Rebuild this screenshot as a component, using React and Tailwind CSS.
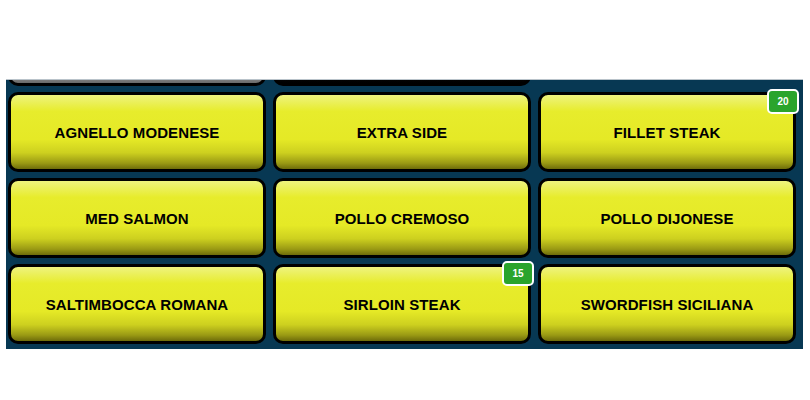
import React, { useLayoutEffect, useRef } from 'react';

// first row is scrolled out of view, only its bottom edge shows
const items = [
  { name: '', tone: 'silver' },
  { name: '', tone: 'dark' },
  null,
  { name: 'AGNELLO MODENESE' },
  { name: 'EXTRA SIDE' },
  { name: 'FILLET STEAK', count: 20 },
  { name: 'MED SALMON' },
  { name: 'POLLO CREMOSO' },
  { name: 'POLLO DIJONESE' },
  { name: 'SALTIMBOCCA ROMANA' },
  { name: 'SIRLOIN STEAK', count: 15 },
  { name: 'SWORDFISH SICILIANA' },
];

const tones = {
  yellow: 'bg-[linear-gradient(to_bottom,#eef37f_0%,#e7ec2c_22%,#e5e926_60%,#cdd01f_78%,#9a9a14_92%,#6e6c0a_100%)]',
  silver: 'bg-[linear-gradient(to_bottom,#fafafa_0%,#e6e6e6_50%,#a8a8a8_85%,#6a6a6a_100%)]',
  dark: 'bg-[linear-gradient(to_bottom,#4a4a4a_0%,#1e1e1e_60%,#000000_100%)]',
};

function MenuButton({ item }) {
  if (!item) return <div />;
  const tone = tones[item.tone || 'yellow'];
  return (
    <button
      className={`relative h-[80px] rounded-[10px] border-[3px] border-black ${tone} flex items-center justify-center px-2`}
    >
      <span className="text-[15px] font-bold text-black leading-none tracking-[0.1px] font-['Liberation_Sans',Arial,sans-serif]">
        {item.name}
      </span>
      {item.count && (
        <span className="absolute -top-[6px] -right-[6px] w-[32px] h-[25px] rounded-[5px] border-2 border-white bg-[#2aa42c] flex items-center justify-center text-[10px] font-bold text-white font-['Liberation_Sans',Arial,sans-serif]">
          {item.count}
        </span>
      )}
    </button>
  );
}

export default function App() {
  const listRef = useRef(null);

  useLayoutEffect(() => {
    if (listRef.current) listRef.current.scrollTop = 76;
  }, []);

  return (
    <div className="w-[810px] h-[400px] bg-white pt-[79px] pl-[6px]">
      <div
        ref={listRef}
        className="w-[797px] h-[270px] overflow-hidden bg-[#073853] border-t border-[#b9c3ca]"
      >
        <div className="grid grid-cols-3 gap-x-[7px] gap-y-[6px] pt-[2px] pl-[2px] pr-[7px] pb-[10px]">
          {items.map((item, i) => (
            <MenuButton key={i} item={item} />
          ))}
        </div>
      </div>
    </div>
  );
}
